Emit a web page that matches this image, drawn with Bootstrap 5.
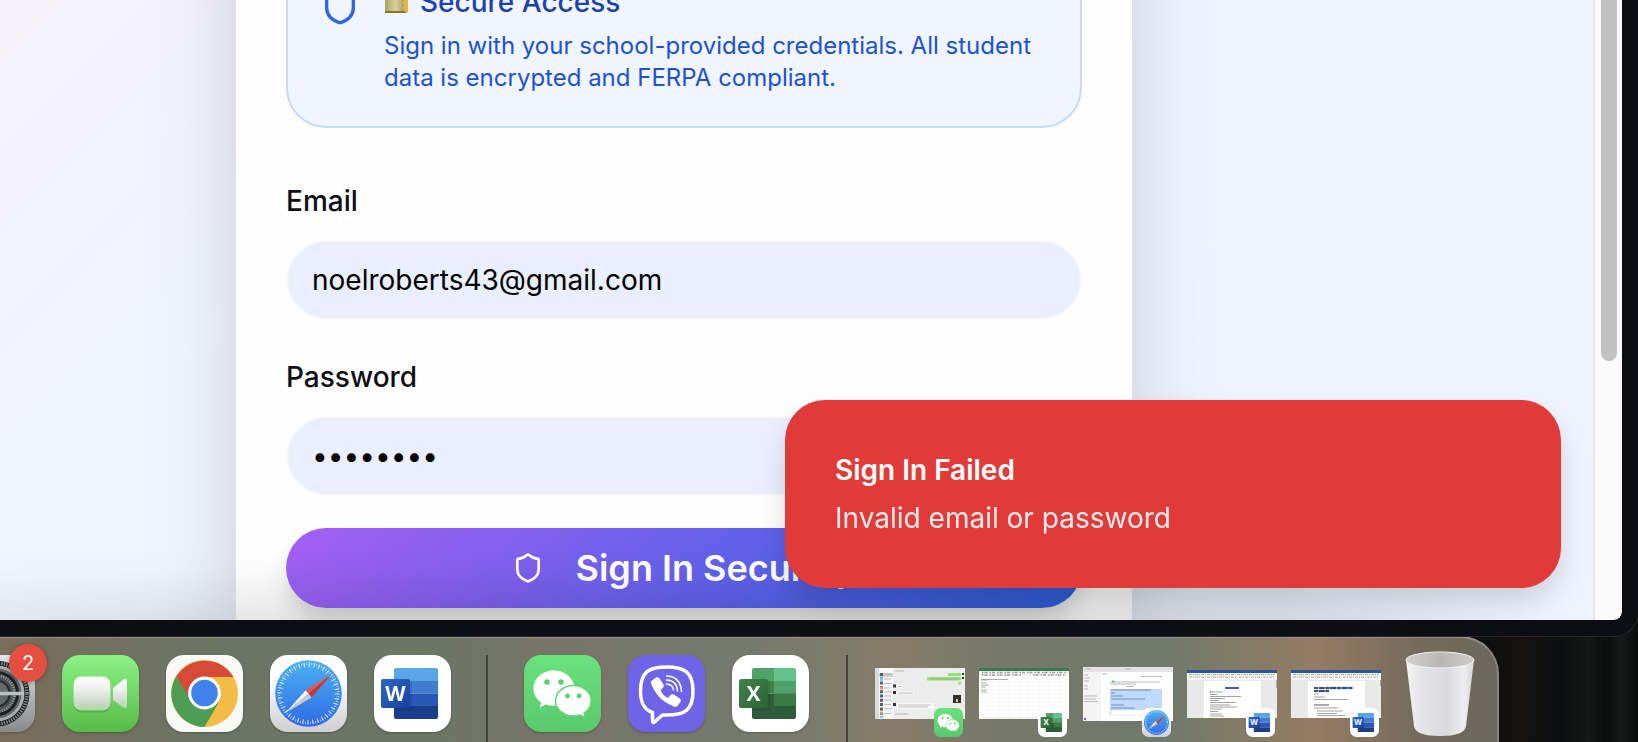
<!DOCTYPE html>
<html lang="en">
<head>
<meta charset="utf-8">
<meta name="viewport" content="width=device-width, initial-scale=1">
<title>Sign in</title>
<link href="https://cdn.jsdelivr.net/npm/bootstrap@5.3.0/dist/css/bootstrap.min.css" rel="stylesheet">
<style>
  body { font-family: Inter, "Liberation Sans", sans-serif; color: #0d0f14;
    background: linear-gradient(90deg, #0c0f0e 0 89%, #0d0f0e 91%, #17120e 93%, #0b0f0f 95%, #141817 97%, #0a0d0d 98%, #171a17 99%, #0a0c0b); }
  .desktop { height: 100vh; }

  /* browser window, its dark frame on the right and bottom */
  .app-window { min-height: 0; border: solid #0d0e13; border-width: 0 16px 16px 0; border-bottom-right-radius: 24px; box-shadow: 0 0 0 1px #26282b; background: #0d0e13; z-index: 1; }
  .page { background: linear-gradient(135deg, #f6f2fc 0, #f0f5fe 24%, #eff4fe 60%, #eef3fe 100%); }
  .page-grid { display: grid; grid-template-columns: minmax(0, 236fr) minmax(0, 896px) minmax(0, 461fr); grid-template-rows: minmax(0, 1fr); height: 100%; align-items: end; }
  .page-shade { inset: auto 0 0 0; height: 72px; pointer-events: none;
    background: linear-gradient(180deg, transparent, rgba(0,0,0,.02) 35%, rgba(0,0,0,.1));
    -webkit-mask-image: linear-gradient(90deg, rgba(0,0,0,.6), #000 20%, #000 80%, transparent 96%); mask-image: linear-gradient(90deg, rgba(0,0,0,.6), #000 20%, #000 80%, transparent 96%); }
  .scroll-track { width: 29px; background: #fafafa; border-left: 2px solid #e8e8e8; padding: 0 5px 0 6px; border-bottom-right-radius: 8px; }
  .scroll-thumb { height: 361px; width: 16px; background: #c1c1c1; border-radius: 0 0 8px 8px; }

  .login-card { background: #fefefe; padding: 160px 50px 12px; box-shadow: 0 50px 100px -24px rgba(0,0,0,.25); }
  .notice { background: #eff6ff; border: 2px solid #c3dbfd; border-radius: 40px; padding: 32px; gap: 24px; margin-bottom: 58px; }
  .notice-icon { color: #2f66e8; margin-top: 4px; }
  .notice-title { font-size: 28px; line-height: 40px; font-weight: 500; color: #1e40af; margin-bottom: 8px; gap: 11px; }
  .notice-text { font-size: 24px; line-height: 32px; color: #2250d0; }
  .field-label { font-size: 28px; line-height: 30px; font-weight: 500; margin-bottom: 24px; }
  .field-box, .field-box:focus { font-size: 28px; height: 80px; padding: 0 24px; border: 2px solid #f7f9fc; border-radius: 40px; background: #e9effe; color: #000; box-shadow: none; }
  .field { margin-bottom: 42px; }
  .field-last { margin-bottom: 32px; }
  .btn-signin, .btn-signin:hover { height: 80px; gap: 32px; border: 0; border-radius: 40px; color: #fff; font-size: 36px; font-weight: 600; line-height: 40px;
    background: linear-gradient(135deg, #a460f3 0, #5a61e8 60%, #2b5fd6 100%); box-shadow: 0 16px 28px -6px rgba(0,0,0,.2); }

  .notify { right: 61px; bottom: 32px; width: 776px; max-width: 90%; padding: 50px; border-radius: 40px; background: #e13b39; color: #fff; box-shadow: 0 16px 32px -4px rgba(0,0,0,.17); font-size: 28px; line-height: 40px; z-index: 2; }
  .notify-title { font-weight: 600; margin-bottom: 8px; }
  .notify-text { opacity: .9; }

  /* dock */
  .dock { height: 106px; width: max-content; max-width: 100%; padding: 17px 22px 0 0; border-top: 2px solid #908e81; border-right: 2px solid #89867b; border-top-right-radius: 38px; overflow: hidden;
    background: linear-gradient(90deg, #796e5b 0, #756f5e 4%, #6a7565 16%, #6b7665 28%, #777569 37%, #757a6e 50%, #857b67 60%, #76786a 67%, #707a6a 78%, #957c62 88%, #736a5d 95%, #6b685b 100%); }
  .dock-group { gap: 27px; }
  .dock-apps { margin-left: -42px; }
  .dock a { display: block; line-height: 0; }
  .dock-line { width: 2px; height: 90px; background: #3f4638; align-self: start; margin-top: -3px; }
  .line-a { margin: 0 36px 0 35px; }
  .line-b { margin: 0 27px 0 37px; }
  .dock-windows { gap: 14px; margin-right: 24px; }
  .dock svg { display: block; overflow: visible; }
  .app-icon { filter: drop-shadow(0 1px 1px rgba(0,0,0,.25)); }
  .mini { width: 29px; height: 29px; right: 2px; bottom: 0; }
  .thumb { width: 90px; height: 82px; }
  .count-badge { left: 9px; top: -11px; width: 38px; height: 38px; margin-left: 42px; border-radius: 50%; background: #e44f3f; color: #fff; font-size: 20px; line-height: 38px; text-align: center; box-shadow: 0 1px 5px rgba(0,0,0,.3); }
</style>
</head>
<body class="overflow-hidden">
<svg width="0" height="0" class="position-absolute" aria-hidden="true">
  <defs>
    <linearGradient id="gGreen" x2="0" y2="1"><stop stop-color="#8bf284"/><stop offset="1" stop-color="#57bb48"/></linearGradient>
    <linearGradient id="gCam" x2="0" y2="1"><stop stop-color="#fff"/><stop offset=".4" stop-color="#eceeec"/><stop offset=".8" stop-color="#c9d6c7"/><stop offset="1" stop-color="#a9dba0"/></linearGradient>
    <linearGradient id="gBlue" x2="0" y2="1"><stop stop-color="#4bb2f0"/><stop offset="1" stop-color="#3069e6"/></linearGradient>
    <linearGradient id="gGrey" x2="0" y2="1"><stop offset=".3" stop-color="#fff"/><stop offset="1" stop-color="#cfcfd0"/></linearGradient>
    <linearGradient id="gSet" x2="0" y2="1"><stop stop-color="#dfe7ea"/><stop offset="1" stop-color="#8a8a8d"/></linearGradient>
    <linearGradient id="gWe" x2="0" y2="1"><stop stop-color="#69e27c"/><stop offset="1" stop-color="#5ac86e"/></linearGradient>
    <linearGradient id="gW" x2="1" y2="1"><stop stop-color="#2f67c4"/><stop offset="1" stop-color="#17429e"/></linearGradient>
    <linearGradient id="gX" x2="1" y2="1"><stop stop-color="#42834c"/><stop offset="1" stop-color="#2a6434"/></linearGradient>
    <linearGradient id="gBin" x2="1"><stop stop-color="#f4f4f5"/><stop offset=".25" stop-color="#e3e3e5"/><stop offset=".6" stop-color="#dadade"/><stop offset=".85" stop-color="#eeeef0"/><stop offset="1" stop-color="#d4d4d6"/></linearGradient>
    <linearGradient id="gBinIn" x2="1"><stop stop-color="#d3d1d0"/><stop offset=".5" stop-color="#b9b6b4"/><stop offset="1" stop-color="#cfcccb"/></linearGradient>
    <linearGradient id="gLock" x2="1"><stop stop-color="#aaa35b"/><stop offset=".5" stop-color="#d9d59a"/><stop offset="1" stop-color="#8f8a4c"/></linearGradient>
    <clipPath id="cPage"><rect x="20" y="13" width="44" height="51" rx="2"/></clipPath>

    <symbol id="wechat" viewBox="0 0 77 77">
      <rect width="77" height="77" rx="17" fill="url(#gWe)"/>
      <path fill="#fff" d="M30 15.500c-11.500 0-20.500 7.800-20.500 18 0 6 3 10.700 7.700 14l-1.400 5 6-3c3 1 5.500 1.300 9 1.300C42.500 50.800 50.500 43 50.500 33.500S41.500 15.500 30 15.500z"/>
      <path fill="#fff" stroke="#62d375" stroke-width="1.500" d="M49.500 30.500c-10 0-18 6.700-18 15.200s8 15.300 18 15.300c2.500 0 4.700-.4 6.700-1l5 2.700-1.200-4.500c4.500-2.800 7.300-7.300 7.300-12.500 0-8.500-8-15.200-17.800-15.200z"/>
      <g fill="#5fce72"><circle cx="23" cy="27" r="2.800"/><circle cx="37" cy="27" r="2.800"/><circle cx="43.500" cy="41" r="2.400"/><circle cx="55" cy="41" r="2.400"/></g>
    </symbol>
    <symbol id="word" viewBox="0 0 77 77">
      <rect width="77" height="77" rx="18" fill="#fff"/>
      <g clip-path="url(#cPage)"><path fill="#5aa5e8" d="M20 13h44v13H20z"/><path fill="#3f7dce" d="M20 26h44v12.500H20z"/><path fill="#2858b5" d="M20 38.500h44v12.500H20z"/><path fill="#1b3e8a" d="M20 51h44v13H20z"/><path fill="#123" opacity=".12" d="M20 26h18v30H20z"/></g>
      <rect x="7" y="24" width="29" height="29" rx="2" fill="url(#gW)"/>
      <text x="21.500" y="46" text-anchor="middle" font-family="Open Sans, sans-serif" font-weight="700" font-size="21" fill="#fff">W</text>
    </symbol>
    <symbol id="excel" viewBox="0 0 77 77">
      <rect width="77" height="77" rx="18" fill="#fff"/>
      <g clip-path="url(#cPage)"><path fill="#4ea36a" d="M20 13h22v13H20z"/><path fill="#65c28a" d="M42 13h22v13H42z"/><path fill="#3f8350" d="M20 26h22v12.500H20z"/><path fill="#4fa26a" d="M42 26h22v12.500H42z"/><path fill="#2d5d3b" d="M20 38.500h44V64H20z"/><path fill="#3a7a49" d="M42 38.500h22v12.500H42z"/><path fill="#121" opacity=".12" d="M20 26h18v30H20z"/></g>
      <rect x="7" y="24" width="29" height="29" rx="2" fill="url(#gX)"/>
      <text x="21.500" y="46" text-anchor="middle" font-family="Open Sans, sans-serif" font-weight="700" font-size="21" fill="#fff">X</text>
    </symbol>
    <symbol id="safari" viewBox="0 0 77 77">
      <rect width="77" height="77" rx="18" fill="url(#gGrey)"/>
      <circle cx="38.500" cy="38.500" r="33.300" fill="url(#gBlue)"/>
      <circle cx="38.500" cy="38.500" r="28.500" fill="none" stroke="#e4f2ff" stroke-width="4.500" stroke-dasharray="1 3.974" opacity=".9"/>
      <circle cx="38.500" cy="38.500" r="29.700" fill="none" stroke="#e4f2ff" stroke-width="2.500" stroke-dasharray=".8 1.791" opacity=".7"/>
      <path fill="#e8574a" d="M62 19 35.500 35.500l3 3z"/><path fill="#c23a33" d="M62 19 38.500 38.500l3 4z"/>
      <path fill="#fff" d="m15.500 58 20-22.500 3 3z"/><path fill="#c9ccd1" d="m15.500 58 23-19.500 3 4z"/>
    </symbol>
  </defs>
</svg>

<div class="desktop d-flex flex-column">
  <main class="app-window position-relative flex-grow-1 d-flex overflow-hidden">
    <div class="page flex-grow-1 position-relative overflow-hidden">
      <div class="page-grid">
        <div></div>
        <form class="login-card" onsubmit="return false">
          <div class="notice d-flex align-items-start">
            <svg class="notice-icon flex-shrink-0" width="40" height="40" viewBox="0 0 24 24" fill="none" stroke="currentColor" stroke-width="2" stroke-linecap="round" stroke-linejoin="round" aria-hidden="true"><path d="M20 13c0 5-3.500 7.500-7.660 8.950a1 1 0 0 1-.67-.01C7.500 20.500 4 18 4 13V6a1 1 0 0 1 1-1c2 0 4.500-1.200 6.240-2.720a1.170 1.170 0 0 1 1.520 0C14.510 3.810 17 5 19 5a1 1 0 0 1 1 1z"/></svg>
            <div>
              <div class="notice-title d-flex align-items-center">
                <svg width="25" height="24" viewBox="0 0 25 24" aria-hidden="true"><path d="M4 10V4a7 7 0 0 1 13 0v6" fill="none" stroke="#b9b9ae" stroke-width="2"/><rect x="1" y="8" width="22" height="15" rx="1" fill="url(#gLock)"/><path d="M1 22h22" stroke="#857433" stroke-width="2"/><path fill="#e8b540" d="M20 4h4v18l-2 1-2-2v-2l-2-1 2-2v-2l-2-1 2-2z"/></svg>
                <span>Secure Access</span>
              </div>
              <div class="notice-text">Sign in with your school-provided credentials. All student data is encrypted and FERPA compliant.</div>
            </div>
          </div>
          <div class="field">
            <label class="field-label d-block" for="email">Email</label>
            <input class="field-box form-control" id="email" type="email" value="noelroberts43@gmail.com">
          </div>
          <div class="field-last">
            <label class="field-label d-block" for="password">Password</label>
            <input class="field-box form-control" id="password" type="password" value="password">
          </div>
          <button type="submit" class="btn btn-signin w-100 d-flex align-items-center justify-content-center">
            <svg width="32" height="32" viewBox="0 0 24 24" fill="none" stroke="currentColor" stroke-width="2" stroke-linecap="round" stroke-linejoin="round" aria-hidden="true"><path d="M20 13c0 5-3.500 7.500-7.660 8.950a1 1 0 0 1-.67-.01C7.500 20.500 4 18 4 13V6a1 1 0 0 1 1-1c2 0 4.500-1.200 6.240-2.720a1.170 1.170 0 0 1 1.520 0C14.510 3.810 17 5 19 5a1 1 0 0 1 1 1z"/></svg>
            <span>Sign In Securely</span>
          </button>
        </form>
        <div></div>
      </div>
      <div class="page-shade position-absolute"></div>
    </div>
    <div class="scroll-track flex-shrink-0"><div class="scroll-thumb"></div></div>
    <div class="notify position-absolute" role="alert">
      <div class="notify-title">Sign In Failed</div>
      <div class="notify-text">Invalid email or password</div>
    </div>
  </main>

  <nav class="dock d-flex align-items-start flex-shrink-0" aria-label="Dock">
    <div class="dock-group dock-apps d-flex position-relative">
      <a href="#" aria-label="System Settings"><svg class="app-icon" width="77" height="77" viewBox="0 0 77 77"><rect width="77" height="77" rx="18" fill="url(#gSet)"/><circle cx="38.500" cy="38.500" r="33" fill="#1d2122"/><circle cx="38.500" cy="38.500" r="30.500" fill="none" stroke="#8b9294" stroke-width="3.500" stroke-dasharray="1.300 1.300"/><circle cx="38.500" cy="38.500" r="26.500" fill="#626769" stroke="#a7afb1" stroke-width="3"/><circle cx="38.500" cy="38.500" r="21" fill="#4d5153" stroke="#1c2021" stroke-width="3"/><circle cx="38.500" cy="38.500" r="18" fill="none" stroke="#8b9294" stroke-width="3" stroke-dasharray="1.200 1.200"/><circle cx="38.500" cy="38.500" r="13" fill="#66696b" stroke="#272a2b" stroke-width="2"/><path d="M38.500 38.500H66M38.500 38.500 24.500 15M38.500 38.500 24.500 62" stroke="#b9c1c3" stroke-width="3.500"/></svg></a>
      <span class="count-badge position-absolute">2</span>
      <a href="#" aria-label="FaceTime"><svg class="app-icon" width="77" height="77" viewBox="0 0 77 77"><rect width="77" height="77" rx="18" fill="url(#gGreen)"/><rect x="11.500" y="22.500" width="37" height="35" rx="8" fill="#2b7a22" opacity=".3"/><rect x="11.500" y="21.500" width="37" height="34" rx="8" fill="url(#gCam)"/><path fill="url(#gCam)" d="M51 33 62 24q3-1 3 2v25q0 3-3 2L51 45z"/></svg></a>
      <a href="#" aria-label="Chrome"><svg class="app-icon" width="77" height="77" viewBox="0 0 77 77"><rect width="77" height="77" rx="18" fill="#f8f8f7"/><circle cx="38.500" cy="38.500" r="33.500" fill="#f3bd45"/><path fill="#d84a38" d="M10 22a33.500 33.500 0 0 1 57.500 0H38.500L24 46z"/><path fill="#4d9e54" d="M10.200 21.200A33.500 33.500 0 0 0 38.500 72L53 47H26z"/><circle cx="38.500" cy="38" r="16.400" fill="#fff"/><circle cx="38.500" cy="38" r="13.300" fill="#4182ea"/></svg></a>
      <a href="#" aria-label="Safari"><svg class="app-icon" width="77" height="77"><use href="#safari"/></svg></a>
      <a href="#" aria-label="Word"><svg class="app-icon" width="77" height="77"><use href="#word"/></svg></a>
    </div>
    <div class="dock-line line-a"></div>
    <div class="dock-group d-flex">
      <a href="#" aria-label="WeChat"><svg class="app-icon" width="77" height="77"><use href="#wechat"/></svg></a>
      <a href="#" aria-label="Viber"><svg class="app-icon" width="77" height="77" viewBox="0 0 77 77"><rect width="77" height="77" rx="18" fill="#6f64e8"/><path fill="#6f64e8" stroke="#fff" stroke-width="3.500" stroke-linejoin="round" d="M38.500 12c-17 0-26 4.500-26 24 0 12 3.500 18.500 12 21.500v8q0 3.500 2.500 1l7.500-6.500h4c18 0 26.500-4.500 26.500-24 0-19.500-9.500-24-26.500-24z"/><path fill="#fff" d="M24 25.500 28 22.500q2-1 3.500 1l4 6q1 2-.5 3.300l-2.500 2.200q2 5.500 7.500 8l2.500-3q1.500-1.500 3.300-.4l6 4q2 1.300.8 3.200l-3 4q-1.600 1.600-4 .6C33 46 27 38.500 23 28.500q-.6-1.800 1-3z"/><g fill="none" stroke="#fff" stroke-width="1.500" stroke-linecap="round"><path d="M38.500 21q14 .5 15 15.500M38.500 25q10.500 .5 11 11M38.500 29q6.500 .5 7 6"/></g></svg></a>
      <a href="#" aria-label="Excel"><svg class="app-icon" width="77" height="77"><use href="#excel"/></svg></a>
    </div>
    <div class="dock-line line-b"></div>
    <div class="dock-windows d-flex">
      <a class="thumb position-relative" href="#" aria-label="WeChat window"><svg width="90" height="82" viewBox="0 0 90 82"><path fill="#ececec" d="M0 13h90v51H0z"/><path fill="#d9dadb" d="M0 13h4v51H0z"/><path fill="#f6f6f6" d="M4 13h14v51H4z"/><path fill="#cfcfcf" d="M4 18h14v4H4z"/><path stroke="#bbb" stroke-width="1" d="M9 19.500h8M9 24h7M9 28.500h8M9 33h6M9 37h8M9 41h7M9 45h8M9 49.500h7M9 54h8M9 58.500h7M20 16h9" /><path stroke="#55606a" stroke-width="3" stroke-dasharray="3 1.300" d="M6.500 18v45"/><path stroke="#ea8d72" stroke-width="3" d="M6.500 31.500v3M6.500 57v2"/><path stroke="#6bc6f0" stroke-width="3" d="M6.500 22.500v3M6.500 61v2"/><path fill="#95e374" d="M73 18h13v3H73zM52 22h34v3.500H52zM83 27h3v2.500h-3z"/><path fill="#fff" d="M22 30h5v2.500h-5zM22 36.500h17v2.500H22zM22 48.500h37v5H22z"/><path stroke="#999" stroke-width=".7" d="M23 31.500h3M23 38h15M23 50h33M23 52h30M54 24h30M20 59h13"/><path fill="#333" d="M18 29.500h3v3h-3zM18 36h3v3h-3zM18 48h3v3h-3zM78 40h8v8h-8zM87 18h2v2h-2zM87 22h2v2h-2z"/><path fill="#e4d64a" d="M81 44h2v3h-2z"/></svg><svg class="mini position-absolute"><use href="#wechat"/></svg></a>
      <a class="thumb position-relative" href="#" aria-label="Excel window"><svg width="90" height="82" viewBox="0 0 90 82"><path fill="#fff" d="M0 13h90v51H0z"/><path fill="#357a4b" d="M0 13h90v3H0z"/><path fill="#f1f1f1" d="M0 16h90v5H0zM0 62h90v2H0z"/><path stroke="#9d9d9d" stroke-width="1.500" stroke-dasharray="1.500 1 3 2" d="M3 17.500h84M3 20h40M54 20h32"/><path stroke="#eceeec" stroke-width=".5" d="M0 23.500h90M0 27h90M0 31h90M0 35h90M0 39h90M0 43h90M0 47h90M0 51h90M0 55h90M0 59h90M10 23v39M20 23v39M30 23v39M40 23v39M50 23v39M60 23v39M70 23v39M80 23v39"/><path stroke="#999" stroke-width=".8" d="M2 25h7M2 28h6M2 30h8M2 32h5M2 35h6M2 37h6M2 24.500h27"/></svg><svg class="mini position-absolute"><use href="#excel"/></svg></a>
      <a class="thumb position-relative" href="#" aria-label="Safari window"><svg width="90" height="82" viewBox="0 0 90 82"><path fill="#fdfdfd" d="M0 12h90v54H0z"/><path fill="#e2e3df" d="M0 12h90v5H0z"/><path fill="#f4f4f4" d="M0 17h18v49H0z"/><path fill="#bfdafb" d="M27 34h52v26H27z"/><path fill="#fff" stroke="#ddd" stroke-width=".5" d="M28 55h44v5H28z"/><path stroke="#aaa" stroke-width=".8" d="M3 14h5M42 14h6M1 20h4M1 23h6M1 26h5M1 31h4M1 34h4M1 41h13M1 44h12M1 46.500h14M19 19h5M58 21.500h21M27 27h50M27 29h26M43 31.500h8"/><path stroke="#7290ba" stroke-width="1" d="M28 35h40M28 38h4M28 41h12M28 44h34M28 50h13M28 53h24"/><path fill="#5ec83d" d="M29 25.500h2v2h-2z"/><path fill="#8757be" d="M1 63h2v2H1z"/></svg><svg class="mini position-absolute"><use href="#safari"/></svg></a>
      <a class="thumb position-relative" href="#" aria-label="Word window one"><svg width="90" height="82" viewBox="0 0 90 82"><path fill="#e9e9e9" d="M0 15h90v48H0z"/><path fill="#2f539b" d="M0 15h90v3H0z"/><path fill="#f5f5f5" d="M0 18h90v7H0z"/><path stroke="#aaa" stroke-width="1" stroke-dasharray="3 1 1 1" d="M2 19.500h86M2 22h48M52 22h36"/><path fill="#fff" d="M17 26h57v37H17z"/><path stroke="#4d5f8a" stroke-width="2" d="M38 33h14"/><path stroke="#999" stroke-width=".9" d="M23 37h13M23 39.500h7M23 41.500h31M23 43.500h15M23 45.500h9M23 47.500h26M23 50h20M23 52h27M23 54h12M23 56.500h8M23 59h12M23 61h14"/><path fill="#5bd04a" d="M23 36h1v2h-1z"/><path fill="#aaa" d="M89 25h1v8h-1z"/></svg><svg class="mini position-absolute"><use href="#word"/></svg></a>
      <a class="thumb position-relative" href="#" aria-label="Word window two"><svg width="90" height="82" viewBox="0 0 90 82"><path fill="#e9e9e9" d="M0 15h90v48H0z"/><path fill="#2f539b" d="M0 15h90v3H0z"/><path fill="#f5f5f5" d="M0 18h90v7H0z"/><path stroke="#aaa" stroke-width="1" stroke-dasharray="3 1 1 1" d="M2 19.500h86M2 22h48M52 22h36"/><path fill="#fff" d="M17 26h57v37H17z"/><path fill="#bcd0f0" d="M35 31.500h27v3H35zM23 34.500h15v3H23z"/><path stroke="#3e4d70" stroke-width="1.800" stroke-dasharray="4 .7 6 .7" d="M23 33h39M23 36h15"/><path stroke="#999" stroke-width=".9" d="M23 39h5M23 42h11M23 44.500h34M23 53h24M26 56h26M26 58.500h20M26 60.500h28"/><path stroke="#555" stroke-width="1.200" d="M23 50h15"/><path fill="#aaa" d="M89 25h1v6h-1z"/></svg><svg class="mini position-absolute"><use href="#word"/></svg></a>
    </div>
    <a href="#" aria-label="Trash"><svg width="70" height="82" viewBox="0 0 70 82"><path fill="url(#gBin)" d="M1 5 9 71q1 10 26 10t26-10L69 5z"/><ellipse cx="35" cy="5" rx="34" ry="8" fill="url(#gBinIn)" stroke="#f1f1f1" stroke-width="1"/></svg></a>
  </nav>
</div>
<script src="https://cdn.jsdelivr.net/npm/bootstrap@5.3.0/dist/js/bootstrap.bundle.min.js"></script>
</body>
</html>
